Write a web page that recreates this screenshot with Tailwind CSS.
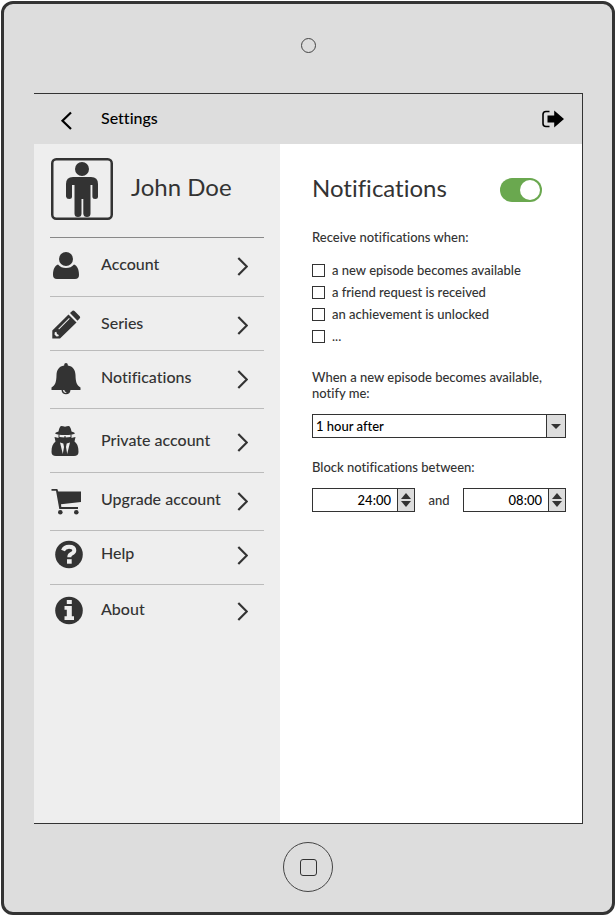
<!DOCTYPE html>
<html lang="en">
<head>
<meta charset="utf-8">
<meta name="viewport" content="width=device-width, initial-scale=1">
<title>Settings</title>
<script src="https://cdn.jsdelivr.net/npm/@tailwindcss/browser@4"></script>
</head>
<body class="bg-white font-['Lato',sans-serif] font-medium text-[#333] [font-variant-ligatures:none]">
<svg class="hidden" aria-hidden="true">
  <symbol id="next" viewBox="0 0 12 22"><path d="M1.5 4.5 10 13 1.5 21.500" transform="translate(.8 -1.500)" fill="none" stroke="currentColor" stroke-width="2.200"/></symbol>
</svg>
<div class="flex min-h-screen flex-col p-px">
<div class="flex flex-1 flex-col rounded-xl border-3 border-[#333] bg-[#ddd]">
  <div class="flex h-[89px] shrink-0 justify-center pt-[34px]"><span class="size-[15px] rounded-full border border-[#444]"></span></div>

  <div class="mr-[29px] ml-[30px] flex flex-1 flex-col border-y border-r border-[#333]">
    <header class="flex h-[50px] shrink-0 items-center pr-[18px] pl-6 text-black">
      <button type="button" aria-label="Back" class="w-[43px]">
        <svg class="h-[22px] w-4" viewBox="0 0 16 22" fill="none" stroke="currentColor" stroke-width="2.2"><path d="M13 4.500 4.500 12.800 13 21"/></svg>
      </button>
      <h1 class="flex-1 pb-0.5 text-base font-medium">Settings</h1>
      <button type="button" aria-label="Log out">
        <svg class="h-5 w-6" viewBox="0 0 24 20" fill="currentColor"><path d="M9.500 2.500H6Q3 2.500 3 5.500V14.500Q3 17.500 6 17.500H9.500" fill="none" stroke="currentColor" stroke-width="1.600"/><path d="M7.500 6.500H14.200V1.500L24 10 14.200 18.500V13.500H7.500Z"/></svg>
      </button>
    </header>

    <div class="flex flex-1">
      <aside class="w-[246px] shrink-0 bg-[#eee] px-4">
        <div class="flex h-[94px] items-center border-b border-[#888] pb-1 pl-px">
          <svg class="size-[62px]" viewBox="0 0 62 62" role="img" aria-label="Profile picture" fill="#333">
            <rect x="1.250" y="1.250" width="59.500" height="59.500" rx="4" fill="none" stroke="#333" stroke-width="2.500"/>
            <circle cx="31" cy="11" r="7"/>
            <path d="M22 19H40Q47 19 47 26V38.500Q47 41 44.200 41T41.400 38.500V27H39.500V55.500Q39.500 59 36 59T32.300 55.500V41H30.500V55.500Q30.500 59 27 59T23.500 55.500V27H21V38.500Q21 41 18.200 41T15 38.500V26Q15 19 22 19Z"/>
          </svg>
          <h2 class="ml-[18px] pb-1 text-[24px] leading-8 font-normal">John Doe</h2>
        </div>
        <nav class="text-base">
          <a href="#account" class="flex items-center border-b border-[#bbb] pt-3 pr-4 pb-3.5">
            <svg class="mr-[19px] size-8" viewBox="0 0 32 32" fill="currentColor"><circle cx="16" cy="9" r="7"/><path d="M8 14.500Q11 18 16 18T24 14.500C27 15.500 29 19 29 25Q29 29 25 29H7Q3 29 3 25C3 19 5 15.500 8 14.500Z"/></svg>
            <span class="flex-1 pb-1">Account</span><svg class="h-[22px] w-3"><use href="#next"/></svg>
          </a>
          <a href="#series" class="flex items-center border-b border-[#bbb] pt-3 pr-4 pb-[9px]">
            <svg class="mr-[19px] size-8" viewBox="0 0 32 32" fill="currentColor"><path fill-rule="evenodd" d="M2.300 21.500 18.500 5.500 26.500 13.500 10 29.500H2.300ZM4.800 23.300 4.500 25.500 6.500 27.500 8.500 27.300 8.800 26 7 25 6.300 22.800ZM8.300 19.700 9 20.400 19.700 9.700 19 9Z"/><path d="M20 4 22.500 1.800Q23.500 1 24.500 2L29.700 7.300Q30.700 8.300 29.800 9.300L27.500 11.800Z"/></svg>
            <span class="flex-1 pb-1">Series</span><svg class="h-[22px] w-3"><use href="#next"/></svg>
          </a>
          <a href="#notifications" class="flex items-center border-b border-[#bbb] pt-3 pr-4 pb-[13px]">
            <svg class="mr-[19px] size-8" viewBox="0 0 32 32" fill="currentColor"><path fill-rule="evenodd" d="M14.200 2.500V1.800Q14.200 0 16 0T17.800 1.800V2.500C23 3.200 25.300 7 25.500 12C25.700 19 26.500 22 30.500 24.500V27H20.500Q20 31.300 16 31.300T11.500 27H1.500V24.500C5.500 22 6.300 19 6.500 12C6.700 7 9 3.200 14.200 2.500ZM13 27Q13.300 30 16.300 30V29.200Q14.500 29 14.300 27Z"/></svg>
            <span class="flex-1 pb-1">Notifications</span><svg class="h-[22px] w-3"><use href="#next"/></svg>
          </a>
          <a href="#private" class="flex items-center border-b border-[#bbb] pt-[17px] pr-4 pb-3.5">
            <svg class="mr-[19px] size-8" viewBox="0 0 32 32" fill="currentColor"><path d="M11.500 0Q13 0 15 .8 17 0 18.500 0 20.500 0 21.500 5.500 25 6.300 25 7.500 22 9 15 9T5 7.500Q5 6.300 8.500 5.500 9.500 0 11.500 0Z"/><path d="M8.500 8.500H9.500V11L14.300 11.500V10.200H15.700V11.500L20.500 11V8.500H21.500V13H8.500Z"/><path fill-rule="evenodd" d="M4.500 11Q10 12.500 15 12.500T25.500 11L24.500 15.500C27.500 18 28.500 21 28.500 26Q28.500 30 24 30H6Q1.500 30 1.500 26C1.500 21 2.500 18 5.500 15.500ZM10 16.500 12.800 28 14 21 13.300 17.500ZM20 16.500 17.200 28 16 21 16.700 17.500Z"/></svg>
            <span class="flex-1 pb-1">Private account</span><svg class="h-[22px] w-3"><use href="#next"/></svg>
          </a>
          <a href="#upgrade" class="flex items-center border-b border-[#bbb] pt-3 pr-4 pb-[13px]">
            <svg class="mr-[19px] size-8" viewBox="0 0 32 32" fill="currentColor"><path d="M1.500 4H7.300L8.300 6.500H31V17L11 19.200 11.300 22H28V24H9.300L6 5.800H1.500Z"/><circle cx="10.300" cy="27.300" r="2.300"/><circle cx="26.300" cy="27.300" r="2.300"/></svg>
            <span class="flex-1 pb-1 whitespace-nowrap">Upgrade account</span><svg class="h-[22px] w-3"><use href="#next"/></svg>
          </a>
          <a href="#help" class="flex items-center border-b border-[#bbb] pt-2 pr-4 pb-[13px]">
            <svg class="mr-[19px] size-8 overflow-visible" viewBox="0 0 32 32"><circle cx="19" cy="15.500" r="13.800" fill="currentColor"/><path d="M13 11.500Q14.500 7.700 19 7.700 24.300 7.700 24.300 11.300 24.300 13.500 21.500 14.800 19.300 15.900 19.300 18.200" fill="none" stroke="#eee" stroke-width="4"/><path d="M17 20.200H21.700V24.700H17Z" fill="#eee"/></svg>
            <span class="flex-1 pb-1">Help</span><svg class="h-[22px] w-3"><use href="#next"/></svg>
          </a>
          <a href="#about" class="flex items-center pt-2.5 pr-4">
            <svg class="mr-[19px] size-8 overflow-visible" viewBox="0 0 32 32"><circle cx="19" cy="15.500" r="13.800" fill="currentColor"/><path d="M16.800 5H21.800V9H16.800ZM14.500 11H21.800V21.300H24V25H14.500V21.300H16.800V14.700H14.500Z" fill="#eee"/></svg>
            <span class="flex-1 pb-1">About</span><svg class="h-[22px] w-3"><use href="#next"/></svg>
          </a>
        </nav>
      </aside>

      <main class="flex-1 bg-white pt-7 pr-4 pl-8 text-[13px] leading-4">
        <div class="flex items-center justify-between pr-6">
          <h2 id="notify-title" class="pb-1 text-[24px] leading-8 font-normal">Notifications</h2>
          <input type="checkbox" role="switch" checked aria-labelledby="notify-title" class="h-6 w-[42px] appearance-none rounded-full bg-[#6aa84f] p-0.5 before:ml-auto before:block before:size-5 before:rounded-full before:bg-white">
        </div>
        <fieldset class="mt-[21px]">
          <legend>Receive notifications when:</legend>
          <div class="mt-[14px]">
            <label class="flex h-[22px] items-center gap-[7px]"><input type="checkbox" class="size-[13px] appearance-none border border-[#333]">a new episode becomes available</label>
            <label class="flex h-[22px] items-center gap-[7px]"><input type="checkbox" class="size-[13px] appearance-none border border-[#333]">a friend request is received</label>
            <label class="flex h-[22px] items-center gap-[7px]"><input type="checkbox" class="size-[13px] appearance-none border border-[#333]">an achievement is unlocked</label>
            <label class="flex h-[22px] items-center gap-[7px]"><input type="checkbox" class="size-[13px] appearance-none border border-[#333]">...</label>
          </div>
        </fieldset>
        <label for="when" class="mt-[22px] block">When a new episode becomes available, notify me:</label>
        <div class="relative mt-[13px]">
          <select id="when" class="block h-6 w-full appearance-none border border-[#333] pl-[3px] text-black"><option>1 hour after</option></select>
          <span class="pointer-events-none absolute inset-y-0 right-0 flex w-5 items-center justify-center border border-[#333] bg-[#ddd]"><svg class="h-[5px] w-[10px]" viewBox="0 0 10 5"><path d="M0 0H10L5 5Z" fill="#333"/></svg></span>
        </div>
        <fieldset class="mt-[21px]">
          <legend>Block notifications between:</legend>
          <div class="mt-[13px] flex items-center justify-between text-black">
            <div class="flex h-6 w-[103px] border border-[#333]">
              <input type="text" aria-label="From" value="24:00" class="w-0 flex-1 pr-1.5 text-right">
              <div class="flex w-[17px] flex-col items-center justify-center gap-0.5 border-l border-[#333] bg-[#ddd]">
                <button type="button" aria-label="Later start"><svg class="h-[6px] w-[10px]" viewBox="0 0 10 6"><path d="M0 6H10L5 0Z" fill="#333"/></svg></button>
                <button type="button" aria-label="Earlier start"><svg class="h-[6px] w-[10px]" viewBox="0 0 10 6"><path d="M0 0H10L5 6Z" fill="#333"/></svg></button>
              </div>
            </div>
            <span class="text-[#333]">and</span>
            <div class="flex h-6 w-[103px] border border-[#333]">
              <input type="text" aria-label="To" value="08:00" class="w-0 flex-1 pr-1.5 text-right">
              <div class="flex w-[17px] flex-col items-center justify-center gap-0.5 border-l border-[#333] bg-[#ddd]">
                <button type="button" aria-label="Later end"><svg class="h-[6px] w-[10px]" viewBox="0 0 10 6"><path d="M0 6H10L5 0Z" fill="#333"/></svg></button>
                <button type="button" aria-label="Earlier end"><svg class="h-[6px] w-[10px]" viewBox="0 0 10 6"><path d="M0 0H10L5 6Z" fill="#333"/></svg></button>
              </div>
            </div>
          </div>
        </fieldset>
      </main>
    </div>
  </div>

  <div class="flex h-[88px] shrink-0 justify-center pt-[18px]">
    <button type="button" aria-label="Home" class="flex size-[50px] items-center justify-center rounded-full border border-[#444]"><span class="size-[17px] rounded-[3px] border border-[#333]"></span></button>
  </div>
</div>
</div>
</body>
</html>
